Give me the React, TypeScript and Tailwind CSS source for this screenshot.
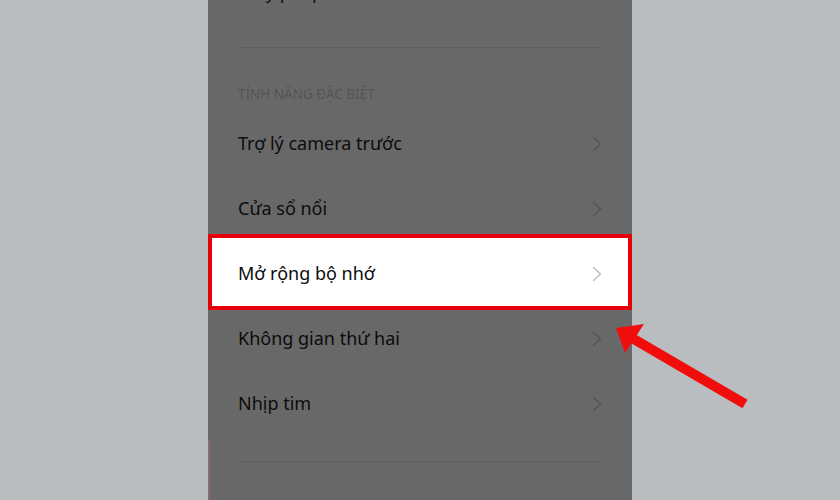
import { FC } from 'react'

const Chevron: FC<{ light?: boolean }> = ({ light }) => (
  <svg width="10" height="16" viewBox="0 0 10 16" fill="none">
    <polyline
      points="1.5,1.5 8.5,8 1.5,14.5"
      stroke={light ? '#bdbdbd' : '#545454'}
      strokeWidth="1.4"
      strokeLinecap="round"
      strokeLinejoin="round"
    />
  </svg>
)

const Row: FC<{ label: string; active?: boolean }> = ({ label, active }) => (
  <div className="relative h-[65px] flex items-center justify-between pl-[30px] pr-[30px]">
    {active && (
      <div className="absolute left-0 right-0 top-[-7px] bottom-[-4px] bg-white border-4 border-[#e5000c]" />
    )}
    <span className="relative text-[18px] text-[#0c0c0c]">{label}</span>
    <span className="relative">
      <Chevron light={active} />
    </span>
  </div>
)

export default function App() {
  const rows = [
    'Trợ lý camera trước',
    'Cửa sổ nổi',
    'Mở rộng bộ nhớ',
    'Không gian thứ hai',
    'Nhịp tim',
  ]
  return (
    <div
      className="relative w-[840px] h-[500px] bg-[#b9bdbf] overflow-hidden"
      style={{ fontFamily: '"Noto Sans", Roboto, sans-serif' }}
    >
      <div className="ml-[208px] w-[424px] h-[500px] bg-[#686868] flex flex-col overflow-hidden">
        <div className="h-[47px] pl-[30px]">
          <p className="text-[18px] leading-[20px] -mt-[18px] text-[#111]">Giấy phép</p>
        </div>
        <div className="mx-[30px] border-t border-[#5e5e5e]" />
        <p className="pl-[30px] mt-[38px] text-[13.5px] leading-[16px] text-[#555555] uppercase">
          Tính năng đặc biệt
        </p>
        <div className="mt-[9px] flex flex-col">
          {rows.map((r, i) => (
            <Row key={r} label={r} active={i === 2} />
          ))}
        </div>
        <div className="mx-[30px] mt-[25px] border-t border-[#5e5e5e]" />
      </div>
      <div className="absolute left-[208px] top-[440px] w-[2px] h-[60px] bg-[#8a6b6b]" />
      <svg className="absolute left-0 top-0" width="840" height="500">
        <line x1="745" y1="404" x2="632" y2="338" stroke="#f20d0d" strokeWidth="10" strokeLinecap="butt" />
        <polygon points="616,328 644,324 625,353" fill="#f20d0d" />
      </svg>
    </div>
  )
}
